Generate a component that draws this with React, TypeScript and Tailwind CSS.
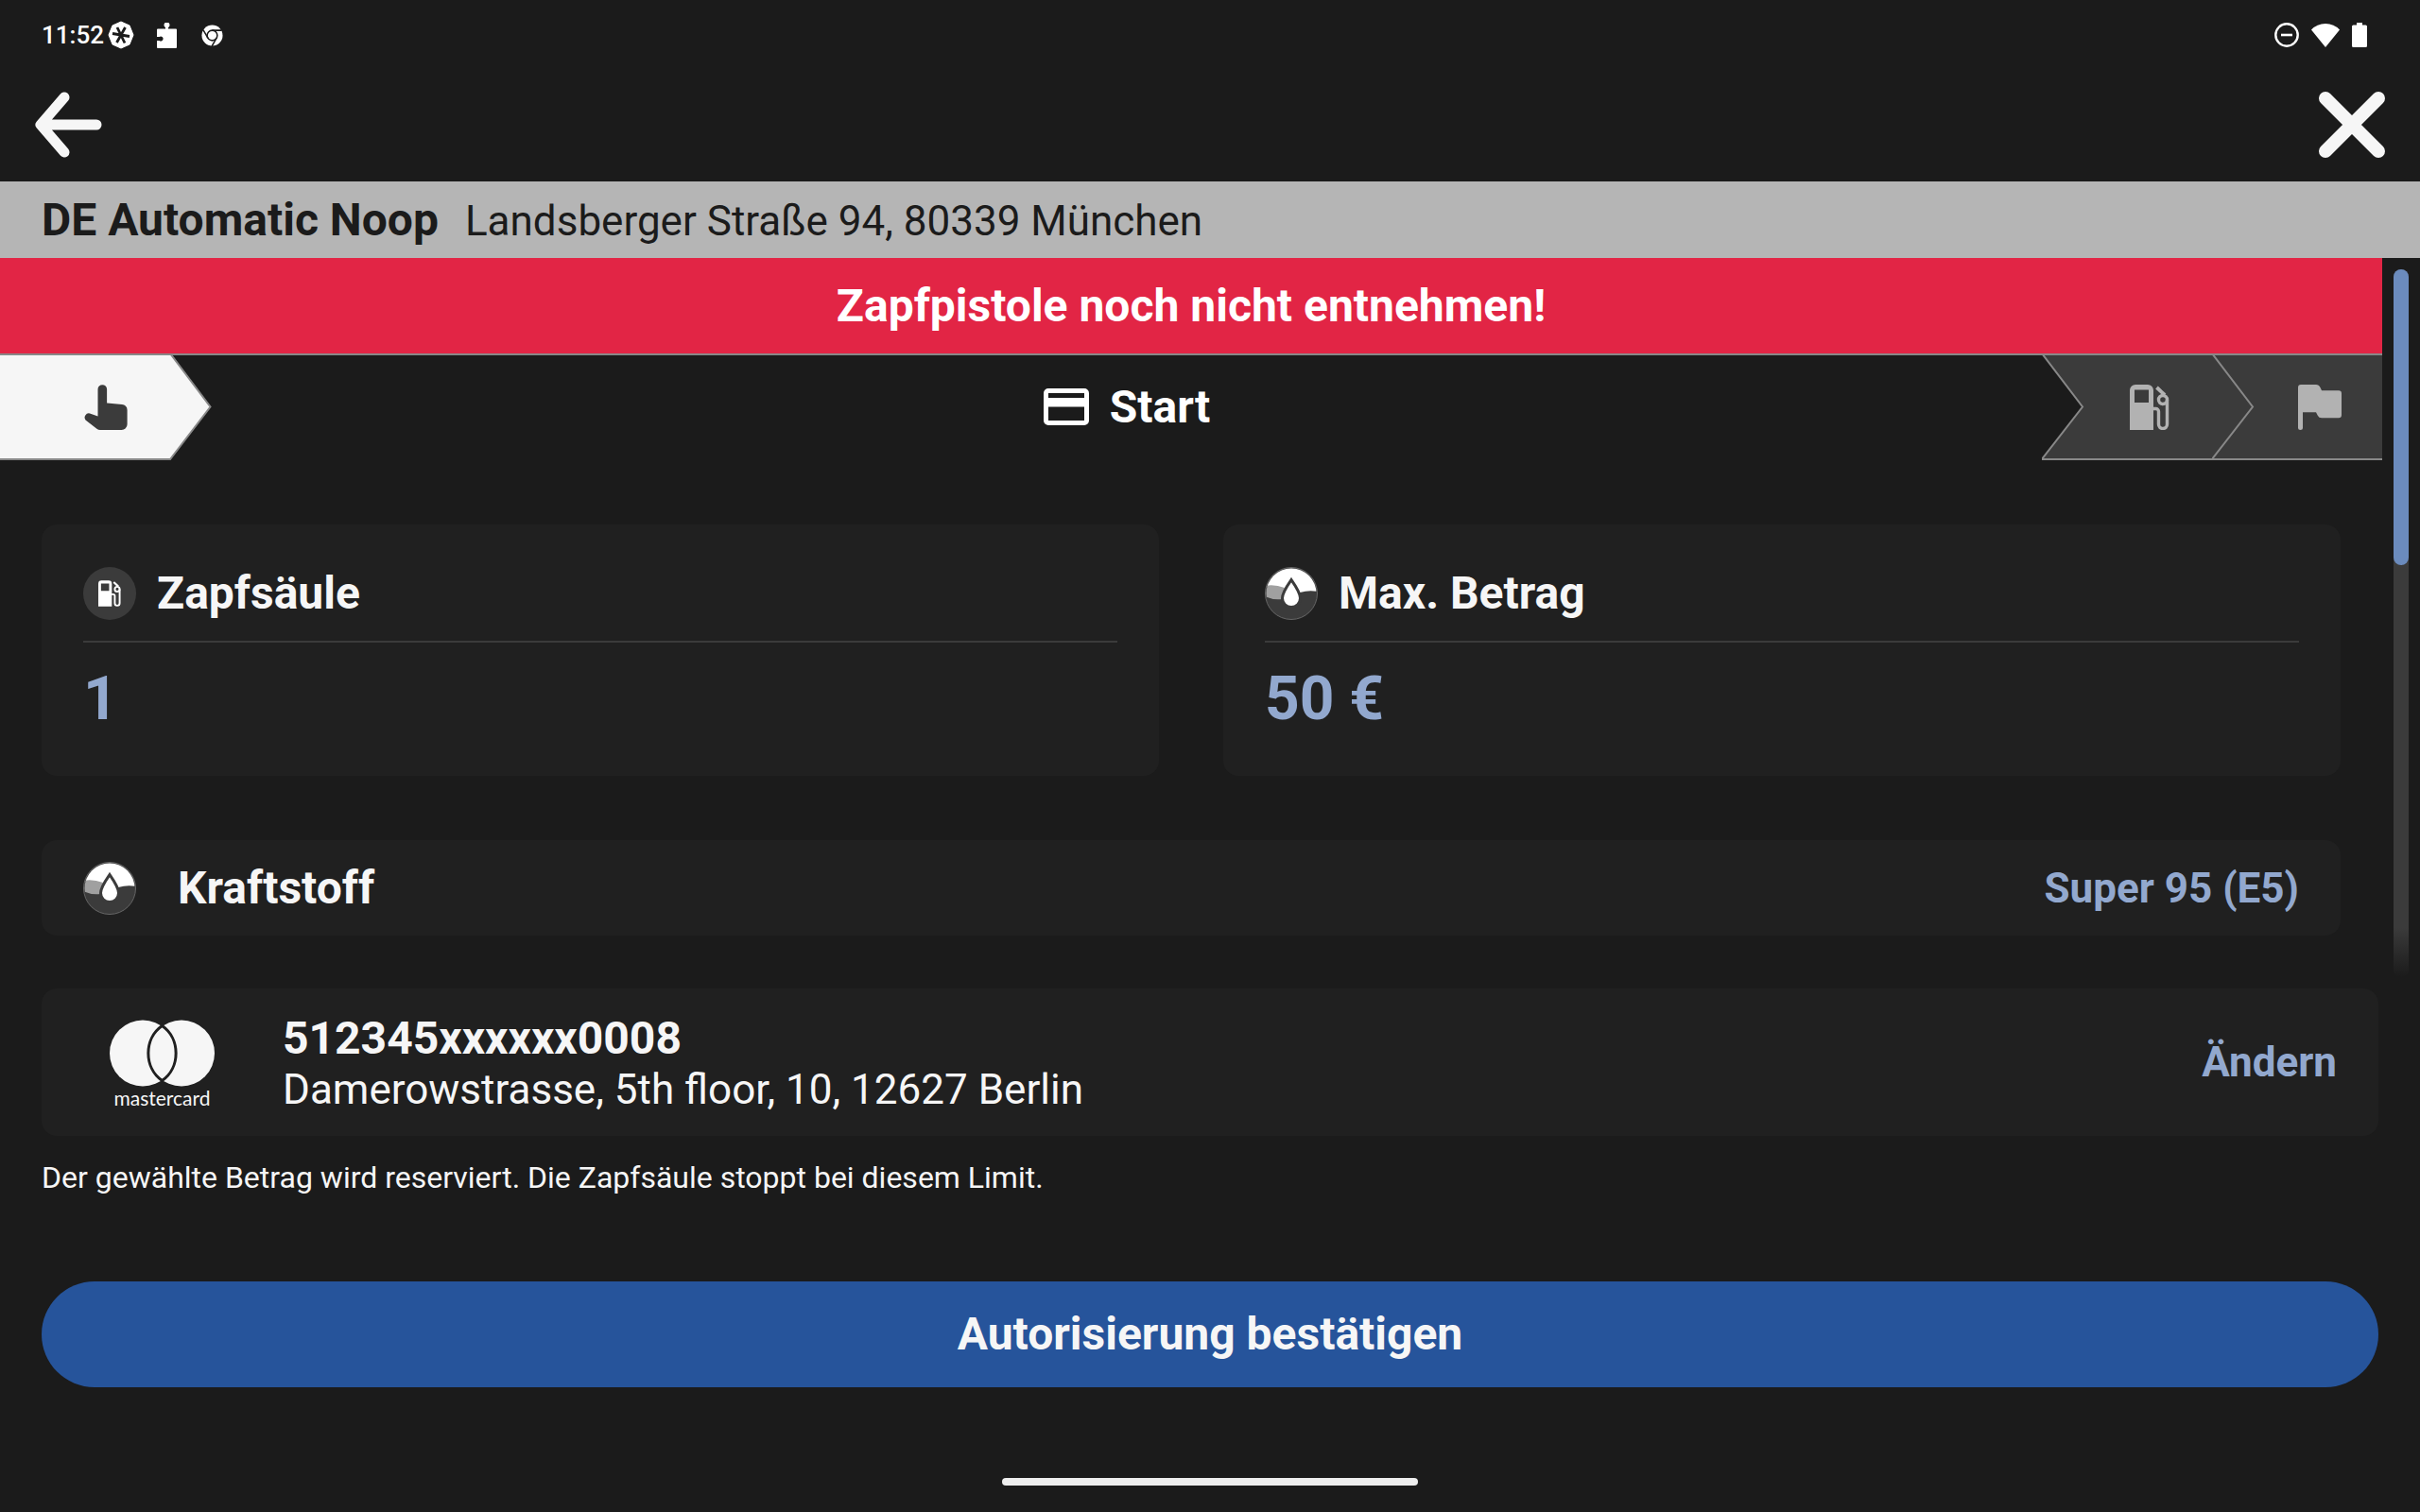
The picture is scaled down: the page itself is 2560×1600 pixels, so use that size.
import React, { useState } from 'react';

type IconProps = { className?: string };

const PumpIcon = ({ className }: IconProps) => (
  <svg viewBox="0 0 42 48" className={className} fill="none" aria-hidden="true">
    <path
      fillRule="evenodd"
      fill="currentColor"
      d="M6 0h13a6 6 0 0 1 6 6v42H0V6a6 6 0 0 1 6-6zM5 5.500v13.500h15V5.500z"
    />
    <path d="M24 25.500h3.500a3 3 0 0 1 3 3V42a4.500 4.500 0 0 0 9 0V16" stroke="currentColor" strokeWidth="3.400" />
    <path d="M28.500 3l8.500 8" stroke="currentColor" strokeWidth="3.800" />
    <circle cx="35" cy="16" r="4.500" stroke="currentColor" strokeWidth="3.400" />
  </svg>
);

const FlagIcon = ({ className }: IconProps) => (
  <svg viewBox="0 0 46 48" className={className} fill="currentColor" aria-hidden="true">
    <path d="M3 0h16q3 0 4.500 3l1.500 3.300h18q3 0 3 3v23q0 3-3 3H25q-3 0-4.200-2.600L19 29.300H5V46q0 2-2.500 2T0 46V3q0-3 3-3z" />
  </svg>
);

const HandIcon = ({ className }: IconProps) => (
  <svg viewBox="0 0 46 48" className={className} fill="currentColor" aria-hidden="true">
    <path d="M14.500 33.500V5a4.800 4.800 0 0 1 9.600 0v14.500l16 1.400a6 6 0 0 1 5.500 6V42a6 6 0 0 1-6 6H17q-2 0-3.600-1.300L1.500 37.500A4.500 4.500 0 0 1 6 30.400z" />
  </svg>
);

const CardIcon = ({ className }: IconProps) => (
  <svg viewBox="0 0 48 39" className={className} fill="currentColor" aria-hidden="true">
    <path
      fillRule="evenodd"
      d="M5 0h38a5 5 0 0 1 5 5v29a5 5 0 0 1-5 5H5a5 5 0 0 1-5-5V5a5 5 0 0 1 5-5zM5 5v5h38V5zM5 19.500V34h38V19.500z"
    />
  </svg>
);

const FuelDropIcon = ({ className }: IconProps) => (
  <svg viewBox="0 0 56 56" className={className} aria-hidden="true">
    <defs>
      <clipPath id="drop-clip">
        <circle cx="28" cy="28" r="26.500" />
      </clipPath>
    </defs>
    <circle cx="28" cy="28" r="27.500" fill="#3b3b3b" stroke="#666666" />
    <g clipPath="url(#drop-clip)">
      <path d="M0 0h56v26q-9-2-19 1l-9 5-10-8-18-4z" fill="#ffffff" />
      <path d="M0 20q10-2 21 2l-3 12Q8 35 0 31z" fill="#a0a0a0" />
    </g>
    <path
      d="M28 13.500c2 3 9.500 13 9.500 19.500a9.500 9.500 0 0 1-19 0c0-6.500 7.500-16.500 9.500-19.500z"
      fill="#ffffff"
      stroke="#3b3b3b"
      strokeWidth="3"
    />
  </svg>
);

const MastercardMark = ({ className }: IconProps) => (
  <svg viewBox="0 0 111 71" className={className} aria-hidden="true">
    <circle cx="35" cy="35.500" r="35" fill="#f6f6f6" />
    <circle cx="76" cy="35.500" r="35" fill="#f6f6f6" />
    <path
      d="M55.500 6.500C36 20 36 51 55.500 64.500C75 51 75 20 55.500 6.500z"
      fill="#f6f6f6"
      stroke="#202020"
      strokeWidth="3"
    />
  </svg>
);

const StatusBar = () => (
  <div className="flex h-[74px] items-center justify-between pl-11 pr-14 text-white">
    <div className="flex items-center">
      <span className="text-[26px] leading-none font-medium">11:52</span>
      <svg viewBox="0 0 28 30" className="ml-1 h-[30px] w-[28px]" aria-hidden="true">
        <path d="M14 1l9 4 4 10-4 10-9 4-9-4L1 15 5 5z" fill="#ffffff" stroke="#ffffff" strokeLinejoin="round" />
        <path d="M5 13.500l18 3M10 7l8 16.500M18.500 7l-9 16" stroke="#1b1b1b" strokeWidth="2.800" />
      </svg>
      <svg viewBox="0 0 21 27" className="ml-6 h-[27px] w-[21px]" fill="#ffffff" aria-hidden="true">
        <path d="M1 6.500h8V5a3 3 0 1 1 3 0v1.500h8q1 0 1 1V26q0 1-1 1H1q-1 0-1-1v-7h2.500a2.500 2.500 0 1 0 0-4H0V7.500q0-1 1-1z" />
      </svg>
      <svg viewBox="0 0 24 24" className="ml-[26px] h-[23px] w-[23px]" aria-hidden="true">
        <circle cx="12" cy="12" r="11.500" fill="#ffffff" />
        <circle cx="12" cy="12" r="5.600" fill="#ffffff" stroke="#1b1b1b" strokeWidth="1.600" />
        <path d="M12 6.400h10.500M7.200 14.800L2 5.800M16.800 14.800L11.600 24" stroke="#1b1b1b" strokeWidth="1.600" />
      </svg>
    </div>
    <div className="flex items-center gap-[13px]">
      <svg viewBox="0 0 26 26" className="h-[26px] w-[26px]" fill="none" stroke="#ffffff" aria-hidden="true">
        <circle cx="13" cy="13" r="11.700" strokeWidth="2.400" />
        <path d="M7 13h12" strokeWidth="2.600" />
      </svg>
      <svg viewBox="0 0 30 26" className="h-[26px] w-[30px]" fill="#ffffff" aria-hidden="true">
        <path d="M15 26L0 7.500Q6 1 15 1t15 6.500z" />
      </svg>
      <svg viewBox="0 0 16 26" className="h-[26px] w-[16px]" fill="#ffffff" aria-hidden="true">
        <path d="M5 0h6v2.500h3.500Q16 2.500 16 4v20.500q0 1.500-1.500 1.500h-13Q0 26 0 24.500V4q0-1.500 1.500-1.500H5z" />
      </svg>
    </div>
  </div>
);

const TopNav = ({ onBack, onClose }: { onBack: () => void; onClose: () => void }) => (
  <nav className="flex h-[118px] items-start justify-between px-9 pt-[22px]">
    <button type="button" aria-label="Zurück" onClick={onBack} className="cursor-pointer">
      <svg
        viewBox="0 0 72 72"
        className="h-[72px] w-[72px]"
        fill="none"
        stroke="#f6f6f6"
        strokeWidth="11"
        strokeLinecap="round"
        strokeLinejoin="round"
      >
        <path d="M32 7L7 36l25 29M8 36h58" />
      </svg>
    </button>
    <button type="button" aria-label="Schließen" onClick={onClose} className="cursor-pointer">
      <svg
        viewBox="0 0 72 72"
        className="h-[72px] w-[72px]"
        fill="none"
        stroke="#f6f6f6"
        strokeWidth="14"
        strokeLinecap="round"
      >
        <path d="M8 8l56 56M64 8L8 64" />
      </svg>
    </button>
  </nav>
);

const Stepper = () => (
  <ol className="flex h-[113px] items-stretch border-t-2 border-[#888888]">
    <li className="relative flex w-[224px] items-center justify-center pb-0.5 text-[#3b3b3b]">
      <svg viewBox="0 0 224 111" className="absolute inset-0 h-full w-full" aria-hidden="true">
        <path d="M-2 -2H180L222.500 54.500 180 110H-2z" fill="#f6f6f6" stroke="#888888" strokeWidth="2" />
      </svg>
      <HandIcon className="relative h-12 w-[46px]" />
    </li>
    <li
      className="flex flex-1 items-center justify-center gap-[22px] pb-0.5 text-5xl leading-none font-bold text-white"
      aria-current="step"
    >
      <CardIcon className="h-[39px] w-12" />
      Start
    </li>
    <li className="relative flex w-[180px] items-center justify-center pb-0.5 text-[#b2b2b2]">
      <svg viewBox="0 0 180 111" className="absolute inset-0 h-full w-full" aria-hidden="true">
        <path d="M0 -2H182V110H0L43 54.500z" fill="#3b3b3b" stroke="#888888" strokeWidth="2" />
      </svg>
      <PumpIcon className="relative ml-12 h-12 w-[42px]" />
    </li>
    <li className="relative flex w-[180px] items-center justify-center pb-0.5 text-[#b2b2b2]">
      <svg viewBox="0 0 180 111" className="absolute inset-0 h-full w-full" aria-hidden="true">
        <path d="M-1 -2H182V110H-1" fill="#3b3b3b" stroke="#888888" strokeWidth="2" />
        <path d="M0 -2L43 54.500 0 110" fill="#3b3b3b" stroke="#888888" strokeWidth="2" />
      </svg>
      <FlagIcon className="relative ml-12 h-12 w-[46px]" />
    </li>
  </ol>
);

interface ValueCardProps {
  icon: React.ReactNode;
  title: string;
  value: string;
}

const ValueCard = ({ icon, title, value }: ValueCardProps) => (
  <section className="rounded-2xl bg-[#202020] px-11 pt-[45px] pb-[43px]">
    <div className="flex items-center gap-[22px] border-b-2 border-[#3b3b3b] pb-[22px]">
      {icon}
      <h2 className="text-5xl leading-[56px] font-bold">{title}</h2>
    </div>
    <p className="pt-[22px] text-[64px] leading-[76px] font-bold text-[#92a8ce]">{value}</p>
  </section>
);

export default function App() {
  const [confirmed, setConfirmed] = useState(false);

  return (
    <div className="flex min-h-screen flex-col bg-[#1b1b1b] font-['Roboto',sans-serif] text-[#f6f6f6]">
      <StatusBar />
      <TopNav onBack={() => setConfirmed(false)} onClose={() => setConfirmed(false)} />

      {/* Station */}
      <header className="flex h-[81px] items-baseline gap-7 bg-[#b5b5b5] px-11 text-[#1b1b1b]">
        <h1 className="text-5xl leading-[82px] font-bold">DE Automatic Noop</h1>
        <p className="text-[44px] leading-[82px]">Landsberger Straße 94, 80339 München</p>
      </header>

      {/* Scrollable part */}
      <div className="flex">
        <main className="flex-1">
          <p role="alert" className="bg-[#e22545] text-center text-5xl leading-[101px] font-bold text-white">
            Zapfpistole noch nicht entnehmen!
          </p>

          <Stepper />

          <div className="px-11 pt-[68px]">
            <div className="grid grid-cols-2 gap-[68px]">
              <ValueCard
                icon={
                  <span className="flex h-14 w-14 items-center justify-center rounded-full bg-[#3b3b3b] text-white">
                    <PumpIcon className="h-7 w-6" />
                  </span>
                }
                title="Zapfsäule"
                value="1"
              />
              <ValueCard icon={<FuelDropIcon className="h-14 w-14" />} title="Max. Betrag" value="50 €" />
            </div>

            <section className="mt-[68px] flex h-[101px] items-center rounded-2xl bg-[#202020] px-11">
              <FuelDropIcon className="h-14 w-14" />
              <h2 className="ml-11 flex-1 text-5xl leading-[56px] font-bold">Kraftstoff</h2>
              <span className="text-[44px] leading-[56px] font-bold text-[#92a8ce]">Super 95 (E5)</span>
            </section>
          </div>
        </main>

        {/* Scrollbar */}
        <div className="flex w-10 justify-center py-3">
          <div className="h-[749px] w-4 rounded-full bg-linear-to-b from-[#3b3b3b] from-93% to-[#1b1b1b]">
            <div className="h-[313px] rounded-full bg-[#6b8bbd]" />
          </div>
        </div>
      </div>

      {/* Payment method */}
      <div className="px-11">
        <section className="flex h-[156px] items-center rounded-2xl bg-[#202020] px-11">
          <div className="ml-7 flex w-[111px] flex-col items-center pt-1">
            <MastercardMark className="h-[71px] w-[111px]" />
            <span className="font-[Lato,sans-serif] text-[21px] leading-6">mastercard</span>
          </div>
          <div className="ml-[72px] flex-1 pt-1">
            <p className="text-5xl leading-[54px] font-bold">512345xxxxxx0008</p>
            <p className="text-[44px] leading-[54px]">Damerowstrasse, 5th floor, 10, 12627 Berlin</p>
          </div>
          <button type="button" className="cursor-pointer text-[44px] leading-[56px] font-bold text-[#92a8ce]">
            Ändern
          </button>
        </section>

        <p className="pt-[22px] text-[32px] leading-[44px]">
          Der gewählte Betrag wird reserviert. Die Zapfsäule stoppt bei diesem Limit.
        </p>

        <button
          type="button"
          aria-pressed={confirmed}
          onClick={() => setConfirmed(true)}
          className="mt-[88px] h-28 w-full cursor-pointer rounded-full bg-[#26549b] text-5xl font-bold"
        >
          Autorisierung bestätigen
        </button>
      </div>

      {/* Home indicator */}
      <div className="mt-auto flex justify-center pb-7">
        <div className="h-2 w-[440px] rounded-full bg-[#eeeeee]" />
      </div>
    </div>
  );
}
